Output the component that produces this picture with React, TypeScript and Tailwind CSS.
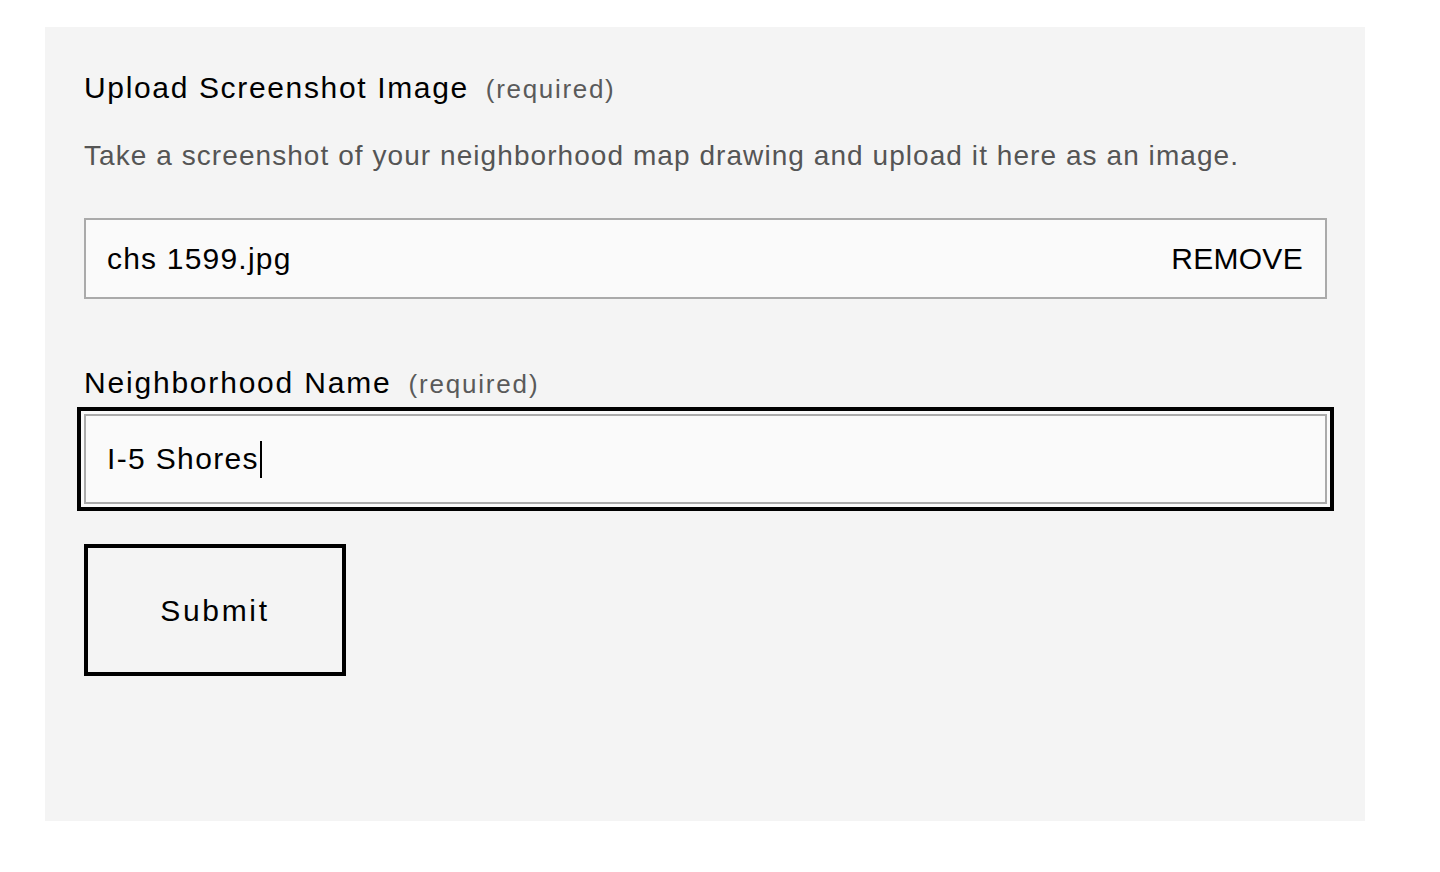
export default function App() {
  return (
    <div className="min-h-[872px] bg-white pt-[27px] pl-[45px] font-['Liberation_Sans',Arial,sans-serif]">
      <div className="w-[1320px] h-[794px] bg-[#f4f4f4] pt-[44px] pl-[39px] pr-[38px]">
        <div className="flex items-baseline h-[34px] leading-[34px]">
          <span className="text-[30px] tracking-[0.055em] text-black">Upload Screenshot Image</span>
          <span className="ml-[17px] text-[26px] tracking-[0.065em] text-[#5a5a5a]">(required)</span>
        </div>

        <p className="mt-[34px] text-[28px] leading-[34px] tracking-[0.038em] text-[#555]">
          Take a screenshot of your neighborhood map drawing and upload it here as an image.
        </p>

        <div className="mt-[45px] h-[81px] border-2 border-[#aaa] bg-[#fafafa] flex items-center justify-between pl-[21px] pr-[22px]">
          <span className="text-[30px] tracking-[0.04em] text-black">chs 1599.jpg</span>
          <span className="text-[30px] tracking-[0.01em] text-black">REMOVE</span>
        </div>

        <div className="mt-[67px] flex items-baseline h-[34px] leading-[34px]">
          <span className="text-[30px] tracking-[0.06em] text-black">Neighborhood Name</span>
          <span className="ml-[17px] text-[26px] tracking-[0.07em] text-[#5a5a5a]">(required)</span>
        </div>

        <div className="mt-[14px] h-[90px] border-2 border-[#aaa] bg-[#fafafa] flex items-center pl-[21px] ring-4 ring-black ring-offset-[3px] ring-offset-[#fafafa]">
          <span className="-mt-[2px] text-[30px] tracking-[0.045em] text-black">I-5 Shores</span>
          <span className="ml-[1px] h-[37px] w-[2px] bg-black" />
        </div>

        <button className="mt-[40px] w-[262px] h-[132px] border-4 border-black flex items-center justify-center text-[30px] tracking-[0.09em] text-black">
          Submit
        </button>
      </div>
    </div>
  );
}
